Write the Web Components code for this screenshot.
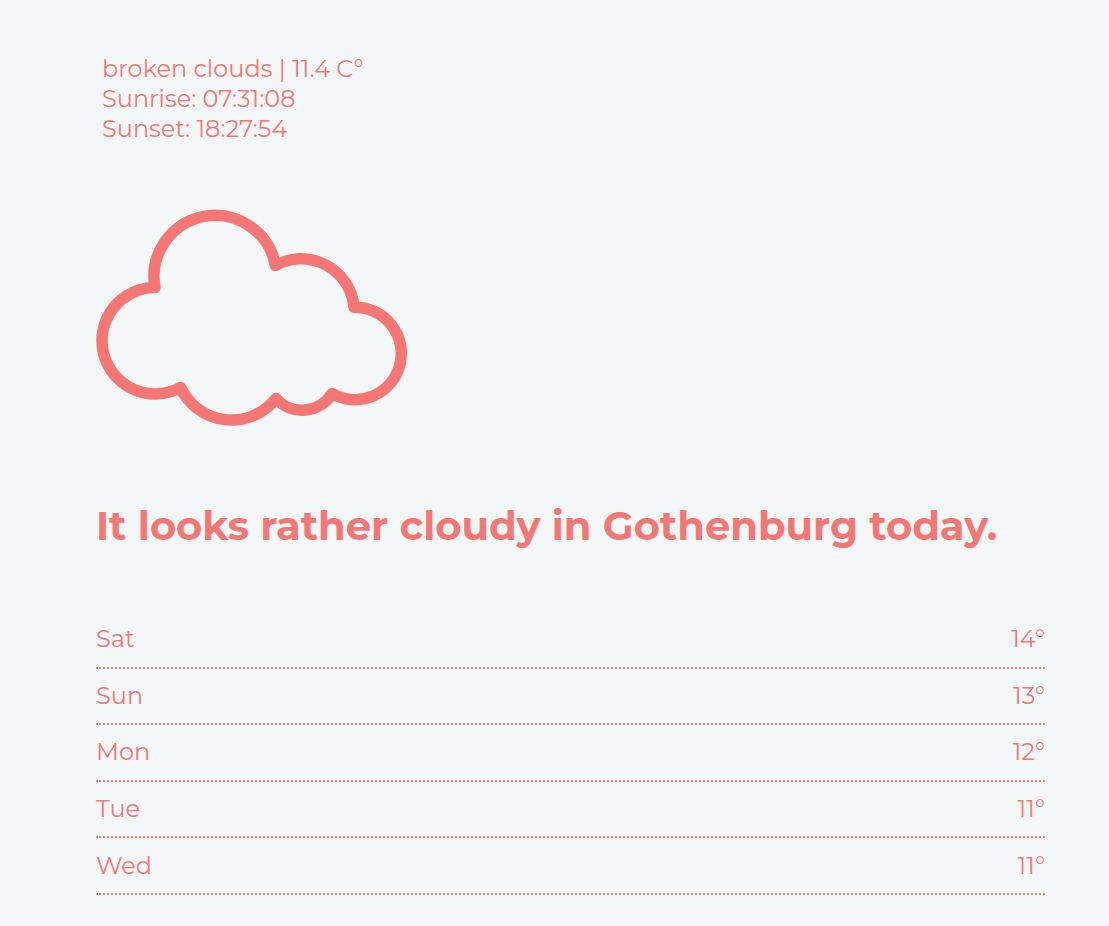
<!DOCTYPE html>
<html lang="en">
<head>
<meta charset="utf-8">
<meta name="viewport" content="width=device-width, initial-scale=1">
<title>Weather in Gothenburg</title>
<style>
  body {
    margin: 0;
    background: #f4f7f8;
    color: #f47775;
    font: 400 24px/30px Montserrat, Inter, sans-serif;
  }
</style>
</head>
<body>
<weather-app>
  <weather-info slot="info" description="broken clouds" temperature="11.4" sunrise="07:31:08" sunset="18:27:54"></weather-info>
  <weather-summary slot="summary">
    <cloud-icon slot="icon"></cloud-icon>
    It looks rather cloudy in Gothenburg today.
  </weather-summary>
  <weather-forecast slot="forecast" days="Sat:14,Sun:13,Mon:12,Tue:11,Wed:11"></weather-forecast>
</weather-app>

<script>
  class ShadowElement extends HTMLElement {
    constructor() {
      super();
      this.attachShadow({ mode: 'open' });
    }
    connectedCallback() {
      this.shadowRoot.innerHTML = this.render();
    }
  }

  class WeatherApp extends ShadowElement {
    render() {
      return `
        <style>
          :host { display: block; padding: 54px 64px 32px 96px; }
          main { display: flex; flex-direction: column; }
        </style>
        <main>
          <slot name="info"></slot>
          <slot name="summary"></slot>
          <slot name="forecast"></slot>
        </main>`;
    }
  }

  class WeatherInfo extends ShadowElement {
    render() {
      const get = name => this.getAttribute(name);
      return `
        <style>
          :host { display: block; padding: 0 6px; }
          p { margin: 0; }
        </style>
        <p>${get('description')} | ${get('temperature')} C°</p>
        <p>Sunrise: ${get('sunrise')}</p>
        <p>Sunset: ${get('sunset')}</p>`;
    }
  }

  class CloudIcon extends ShadowElement {
    render() {
      return `
        <style>
          :host { display: block; width: 312px; }
          svg { display: block; width: 100%; overflow: visible; }
        </style>
        <svg viewBox="96 210 312 216" fill="none" stroke="currentColor" stroke-width="11.5"
             stroke-linejoin="round" aria-hidden="true">
          <path d="M155 287.5A60.800 60.800 0 0 1 275.400 265.500A53 53 0 0 1 354 307.300A46.200 46.200 0 1 1 332 393.500A35 35 0 0 1 276 398.500A56.500 56.500 0 0 1 180.500 387.500A53.200 53.200 0 1 1 155 287.500Z"/>
        </svg>`;
    }
  }

  class WeatherSummary extends ShadowElement {
    render() {
      return `
        <style>
          :host { display: block; padding-top: 66px; }
          h1 { margin: 75px 0 0; font-size: 40px; line-height: 50px; font-weight: 700; }
        </style>
        <slot name="icon"></slot>
        <h1><slot></slot></h1>`;
    }
  }

  class WeatherForecast extends ShadowElement {
    render() {
      const rows = this.getAttribute('days').split(',').map(entry => {
        const [day, degrees] = entry.split(':');
        return `<tr><th scope="row">${day}</th><td>${degrees}°</td></tr>`;
      }).join('');
      return `
        <style>
          :host { display: block; padding-top: 61px; }
          table { display: block; }
          tbody { display: grid; grid-auto-rows: 1fr; min-height: 283px; }
          tr { display: flex; justify-content: space-between; align-items: center; border-bottom: 2px dotted; }
          th, td { padding: 0; font-weight: inherit; }
        </style>
        <table><tbody>${rows}</tbody></table>`;
    }
  }

  customElements.define('weather-app', WeatherApp);
  customElements.define('weather-info', WeatherInfo);
  customElements.define('cloud-icon', CloudIcon);
  customElements.define('weather-summary', WeatherSummary);
  customElements.define('weather-forecast', WeatherForecast);
</script>
</body>
</html>
